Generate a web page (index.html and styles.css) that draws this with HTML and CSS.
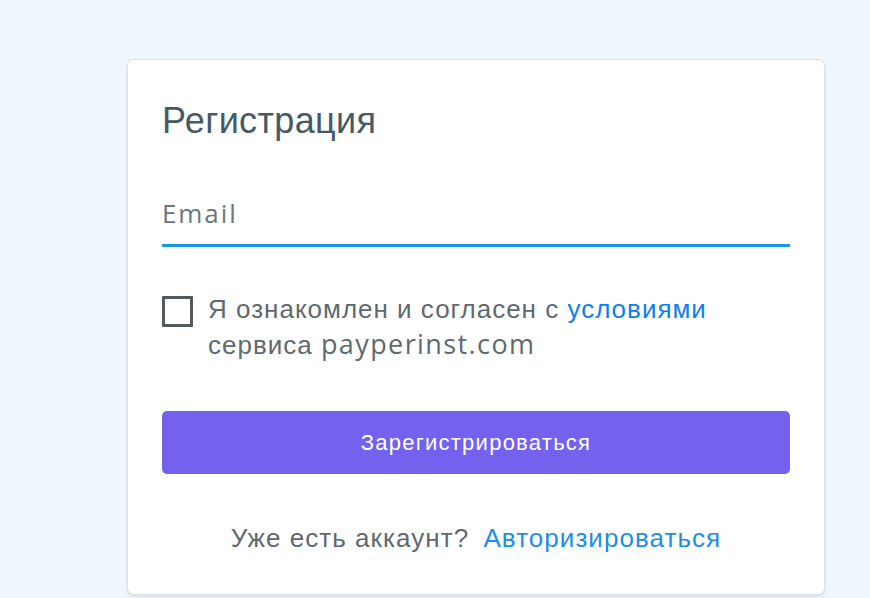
FILE: index.html
```html
<!DOCTYPE html>
<html lang="ru">
<head>
<meta charset="utf-8">
<title>Регистрация</title>
<link rel="stylesheet" href="styles.css">
</head>
<body>
<div class="page">
  <div class="card">
    <h1 class="title">Регистрация</h1>
    <div class="field">
      <input class="input" type="text" placeholder="Email">
    </div>
    <label class="agree">
      <span class="box"></span>
      <span class="agree-text">
        <span class="line">Я ознакомлен и согласен с <a class="link" href="#">условиями</a></span>
        <span class="line">сервиса <span class="latin">payperinst.com</span></span>
      </span>
    </label>
    <button class="btn" type="button">Зарегистрироваться</button>
    <p class="footer">Уже есть аккаунт? <a class="link2" href="#">Авторизироваться</a></p>
  </div>
</div>
</body>
</html>
```

FILE: styles.css
```css
* { box-sizing: border-box; }
html, body { margin: 0; padding: 0; }
body {
  background: #eef6fe;
  font-family: "Liberation Sans", Arial, sans-serif;
  width: 870px;
  height: 598px;
  overflow: hidden;
}
.page {
  padding: 59px 0 0 127px;
}
.card {
  width: 698px;
  height: 536px;
  background: #ffffff;
  border: 1px solid #dcdfe3;
  border-radius: 7px;
  box-shadow: 0 2px 3px rgba(170, 190, 215, 0.35);
  padding: 39px 34px 0 34px;
  display: flex;
  flex-direction: column;
}
.title {
  margin: 0;
  font-size: 36px;
  font-weight: 400;
  line-height: 44px;
  letter-spacing: 0.35px;
  color: #455a64;
}
.field {
  margin-top: 48px;
}
.input {
  display: block;
  width: 100%;
  border: none;
  border-bottom: 3px solid #1a97ea;
  outline: none;
  padding: 0 0 10px 0;
  height: 56px;
  font-family: "Open Sans", "Liberation Sans", sans-serif;
  font-size: 26px;
  color: #5f6b72;
  background: transparent;
}
.input::placeholder {
  color: #6c777d;
  letter-spacing: 1.9px;
}
.agree {
  margin-top: 47px;
  display: flex;
  align-items: flex-start;
  gap: 15px;
  font-size: 26px;
  line-height: 36px;
  letter-spacing: 1px;
  color: #5d6a70;
}
.box {
  flex: none;
  width: 31px;
  height: 31px;
  border: 3px solid #545a5e;
  border-radius: 1px;
  margin-top: 2px;
}
.agree-text { display: block; margin-top: -3px; }
.line { display: block; white-space: nowrap; }
.line + .line { margin-top: -1px; }
.latin {
  font-family: "Open Sans", "Liberation Sans", sans-serif;
  font-size: 27px;
  letter-spacing: 1.4px;
}
.link {
  color: #0d7ef4;
  text-decoration: none;
}
.btn {
  margin-top: 48px;
  height: 63px;
  width: 100%;
  border: none;
  border-radius: 5px;
  background: #7462ee;
  color: #ffffff;
  font-family: "Liberation Sans", Arial, sans-serif;
  font-size: 22px;
  letter-spacing: 1.25px;
  cursor: pointer;
}
.footer {
  margin: 46px 0 0 0;
  text-align: center;
  font-size: 26px;
  line-height: 36px;
  color: #5d6a70;
  letter-spacing: 1.05px;
}
.link2 {
  margin-left: 6px;
  color: #1e8ee6;
  text-decoration: none;
}
```
